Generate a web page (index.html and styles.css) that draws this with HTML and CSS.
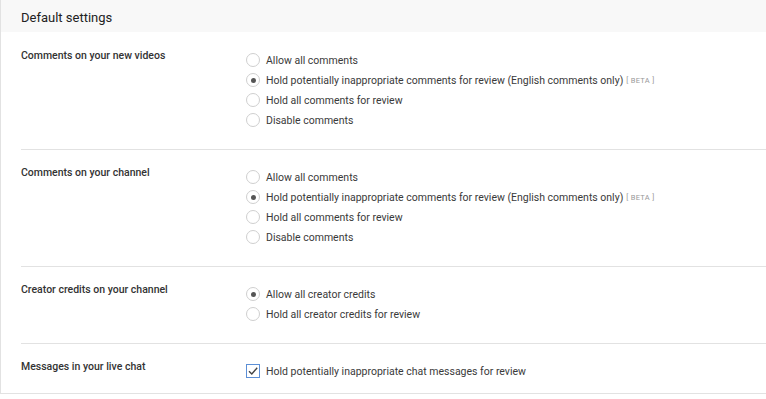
FILE: index.html
```html
<!DOCTYPE html>
<html lang="en">
<head>
    <meta charset="UTF-8">
    <title>Community settings</title>
    <link rel="stylesheet" href="styles.css">
</head>
<body>
    <div class="panel">
        <div class="panel-header">
            <h2>Default settings</h2>
        </div>

        <div class="setting-row">
            <div class="setting-label">Comments on your new videos</div>
            <div class="options">
                <label class="option"><span class="radio"></span>Allow all comments</label>
                <label class="option"><span class="radio checked"></span>Hold potentially inappropriate comments for review (English comments only)<span class="beta">[ BETA ]</span></label>
                <label class="option"><span class="radio"></span>Hold all comments for review</label>
                <label class="option"><span class="radio"></span>Disable comments</label>
            </div>
        </div>

        <div class="setting-row">
            <div class="setting-label">Comments on your channel</div>
            <div class="options">
                <label class="option"><span class="radio"></span>Allow all comments</label>
                <label class="option"><span class="radio checked"></span>Hold potentially inappropriate comments for review (English comments only)<span class="beta">[ BETA ]</span></label>
                <label class="option"><span class="radio"></span>Hold all comments for review</label>
                <label class="option"><span class="radio"></span>Disable comments</label>
            </div>
        </div>

        <div class="setting-row">
            <div class="setting-label">Creator credits on your channel</div>
            <div class="options">
                <label class="option"><span class="radio checked"></span>Allow all creator credits</label>
                <label class="option"><span class="radio"></span>Hold all creator credits for review</label>
            </div>
        </div>

        <div class="setting-row last">
            <div class="setting-label">Messages in your live chat</div>
            <div class="options">
                <label class="option">
                    <span class="checkbox">
                        <svg width="12" height="12" viewBox="0 0 12 12"><path d="M2 6.2 L4.8 9 L10.2 2.8" fill="none" stroke="#444" stroke-width="1.4"/></svg>
                    </span>Hold potentially inappropriate chat messages for review
                </label>
            </div>
        </div>
    </div>
</body>
</html>
```

FILE: styles.css
```css
* {
    margin: 0;
    padding: 0;
    box-sizing: border-box;
}

body {
    font-family: Roboto, 'Liberation Sans', Arial, sans-serif;
    color: #333;
    background: #fff;
}

.panel {
    width: 780px;
    border-left: 1px solid #e2e2e2;
    border-bottom: 1px solid #e2e2e2;
    background: #fff;
}

.panel-header {
    background: #f8f8f8;
    height: 32px;
    padding: 3px 20px 0;
    display: flex;
    align-items: center;
}

.panel-header h2 {
    font-size: 13px;
    font-weight: 400;
    color: #222;
}

.setting-row {
    display: flex;
    margin-left: 20px;
    padding: 15px 0 19px;
    border-bottom: 1px solid #e2e2e2;
}

.panel-header + .setting-row {
    padding-top: 16px;
}

.setting-row.last {
    border-bottom: none;
    padding-bottom: 12px;
}

.setting-label {
    width: 225px;
    font-size: 10.5px;
    font-weight: 500;
    line-height: 16px;
    color: #333;
}

.options {
    display: flex;
    flex-direction: column;
    margin-top: 2px;
}

.option {
    display: flex;
    align-items: center;
    height: 20px;
    font-size: 10.5px;
    color: #3a3a3a;
}

.radio {
    width: 14px;
    height: 14px;
    border: 1px solid #cfcfcf;
    border-radius: 50%;
    margin-right: 6px;
    display: flex;
    align-items: center;
    justify-content: center;
}

.radio.checked::after {
    content: "";
    width: 5px;
    height: 5px;
    border-radius: 50%;
    background: #555;
}

.checkbox {
    width: 14px;
    height: 14px;
    border: 1px solid #5c8fd6;
    margin-right: 6px;
    display: flex;
    align-items: center;
    justify-content: center;
}

.beta {
    font-size: 7.5px;
    color: #999;
    letter-spacing: 0.3px;
    margin-left: 3px;
}
```
